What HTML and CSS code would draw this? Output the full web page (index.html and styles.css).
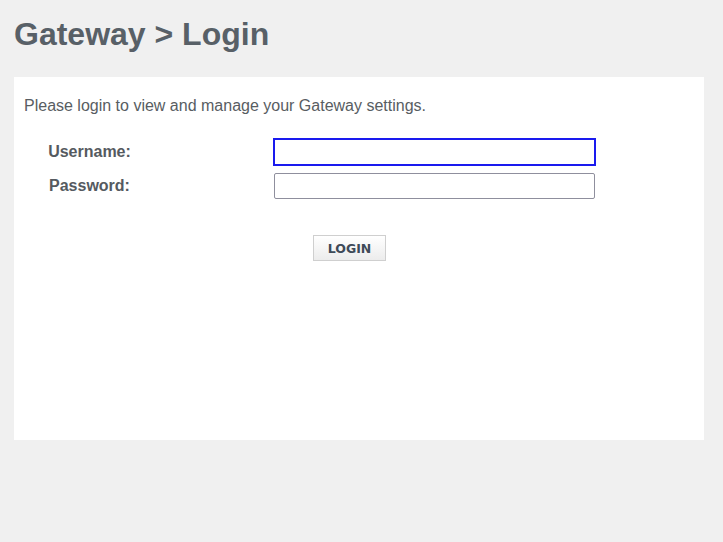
FILE: index.html
```html
<!DOCTYPE html>
<html>
<head>
<meta charset="utf-8">
<title>Gateway &gt; Login</title>
<link rel="stylesheet" href="styles.css">
</head>
<body>
<h1 class="title">Gateway &gt; Login</h1>
<div class="panel">
  <p class="intro">Please login to view and manage your Gateway settings.</p>
  <form class="login-form">
    <div class="fields">
      <label class="field-label" for="user">Username:</label>
      <input class="field-input focused" id="user" type="text">
      <label class="field-label" for="pass">Password:</label>
      <input class="field-input" id="pass" type="password">
    </div>
    <div class="actions">
      <button class="login-btn" type="button">LOGIN</button>
    </div>
  </form>
</div>
</body>
</html>
```
FILE: styles.css
```css
html, body {
  margin: 0;
  padding: 0;
  background: #f0f0f0;
}
body {
  padding: 0 19px 0 14px;
  font-family: "Liberation Sans", Arial, sans-serif;
  color: #555;
}
.title {
  margin: 16px 0 0;
  font-size: 32px;
  line-height: 37px;
  font-weight: bold;
  color: #586067;
}
.panel {
  margin-top: 24px;
  width: 690px;
  height: 363px;
  box-sizing: border-box;
  background: #fff;
  padding: 20px 10px 10px;
}
.intro {
  margin: 0;
  font-size: 16px;
  line-height: 18px;
  color: #585d62;
}
.login-form {
  margin: 0;
}
.fields {
  margin-top: 24px;
  display: grid;
  grid-template-columns: 131px 321px;
  column-gap: 119px;
  row-gap: 8px;
  align-items: center;
}
.field-label {
  text-align: center;
  font-size: 16px;
  font-weight: bold;
  color: #555a60;
}
.field-input {
  width: 321px;
  height: 26px;
  box-sizing: border-box;
  margin: 0;
  border: 1px solid #8f8f9d;
  border-radius: 2px;
  background: #fff;
  font-size: 14px;
  padding: 2px 4px;
}
.field-input.focused {
  border-color: #1a1aee;
  outline: 1px solid #1a1aee;
  border-radius: 0;
}
.field-input:focus {
  outline: 1px solid #1a1aee;
}
.actions {
  margin-top: 36px;
  padding-left: 289px;
}
.login-btn {
  width: 73px;
  height: 26px;
  margin: 0;
  padding: 0;
  border: 1px solid #cfcfcf;
  background: linear-gradient(#ffffff, #ececec);
  font-family: "DejaVu Sans", Verdana, sans-serif;
  font-weight: bold;
  font-size: 12.5px;
  color: #3e4a58;
}
```
